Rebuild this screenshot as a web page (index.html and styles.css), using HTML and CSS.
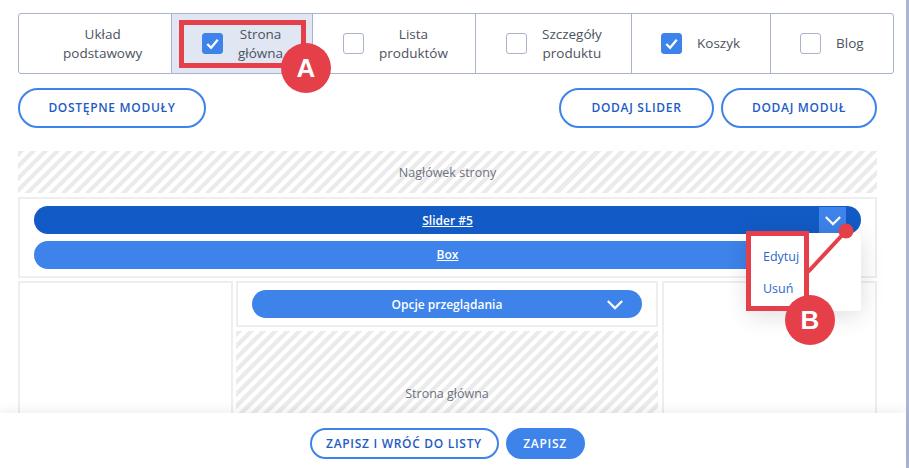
FILE: index.html
```html
<!DOCTYPE html>
<html lang="pl">
<head>
<meta charset="utf-8">
<title>Układ strony</title>
<link rel="stylesheet" href="styles.css">
</head>
<body>
<div class="page">
  <main class="content">
    <div class="tabs">
      <div class="tab tab-base"><span>Układ<br>podstawowy</span></div>
      <div class="tab tab-home is-selected"><span class="check is-on"><svg viewBox="0 0 20 20"><path d="M4.5 10.500l4 4 7-8.500"/></svg></span><span class="tab-label">Strona<br>główna</span></div>
      <div class="tab tab-list"><span class="check"></span><span class="tab-label">Lista<br>produktów</span></div>
      <div class="tab tab-detail"><span class="check"></span><span class="tab-label">Szczegóły<br>produktu</span></div>
      <div class="tab tab-cart"><span class="check is-on"><svg viewBox="0 0 20 20"><path d="M4.5 10.500l4 4 7-8.500"/></svg></span><span class="tab-label">Koszyk</span></div>
      <div class="tab tab-blog"><span class="check"></span><span class="tab-label">Blog</span></div>
    </div>
    <div class="actions">
      <button class="btn btn-avail">DOSTĘPNE MODUŁY</button>
      <div class="actions-right">
        <button class="btn btn-slider">DODAJ SLIDER</button>
        <button class="btn btn-module">DODAJ MODUŁ</button>
      </div>
    </div>
    <div class="hatch hatch-head">Nagłówek strony</div>
    <section class="frame frame-top">
      <div class="bar bar-dark"><a class="bar-link">Slider #5</a><span class="bar-toggle"><svg viewBox="0 0 20 12"><path d="M2 2l8 8 8-8"/></svg></span></div>
      <div class="bar bar-box"><a class="bar-link">Box</a></div>
    </section>
    <div class="columns">
      <div class="frame col-side"></div>
      <div class="col-mid">
        <div class="frame frame-opts">
          <div class="bar bar-opts"><span>Opcje przeglądania</span><svg class="opts-caret" viewBox="0 0 20 12"><path d="M2 2l8 8 8-8"/></svg></div>
        </div>
        <div class="hatch hatch-main">Strona główna</div>
      </div>
      <div class="frame col-side col-right"></div>
    </div>
  </main>
  <div class="scrollbar"></div>

  <div class="menu"><a>Edytuj</a><a>Usuń</a></div>

  <svg class="connector" viewBox="0 0 909 468"><path d="M808 272L846 231"/><circle cx="846" cy="231" r="7.500"/></svg>
  <div class="mark mark-a"></div>
  <div class="badge badge-a">A</div>
  <div class="mark mark-b"></div>
  <div class="badge badge-b">B</div>

  <footer class="footer">
    <button class="btn btn-foot btn-back">ZAPISZ I WRÓĆ DO LISTY</button>
    <button class="btn btn-foot btn-save">ZAPISZ</button>
  </footer>
</div>
</body>
</html>
```
FILE: styles.css
```css
* { box-sizing: border-box; }
html, body { margin: 0; padding: 0; background: #fff; }
body { font-family: "Open Sans", "Noto Sans", "Liberation Sans", sans-serif; color: #4a5060; }
.page { position: relative; width: 909px; height: 468px; overflow: hidden; display: flex; }
.content { width: 906px; padding: 13px 12px 0 18px; flex: none; }
.scrollbar { width: 3px; background: #a9b6d6; flex: none; }

.tabs { display: flex; width: 876px; height: 61px; border: 1px solid #a9b3cd; border-radius: 3px; margin-bottom: 14px; }
.tab { display: flex; align-items: center; padding-left: 30px; font-size: 13.5px; line-height: 18.500px; text-align: center; border-left: 1px solid #a9b3cd; color: #4d5260; }
.tab:first-child { border-left: 0; }
.tab-base { width: 152px; padding-left: 44px; }
.tab-home { width: 141px; }
.tab-list { width: 163px; }
.tab-detail { width: 156px; }
.tab-cart { width: 139px; padding-left: 29px; }
.tab-blog { flex: 1; padding-left: 29px; }
.is-selected { background: #e0e6f2; }
.check { width: 21px; height: 21px; border: 1px solid #aab3ca; border-radius: 3px; background: #fff; display: flex; flex: none; }
.check.is-on { background: #3d83ea; border-color: #3d83ea; }
.check svg { width: 19px; height: 19px; fill: none; stroke: #fff; stroke-width: 2.400; }
.tab-label { margin-left: 15px; }

.actions { display: flex; justify-content: space-between; width: 859px; margin-bottom: 23px; }
.actions-right { display: flex; gap: 7px; }
.btn { height: 40px; border: 2px solid #3d83ea; border-radius: 20px; background: #fff; color: #1d5cc4; font: 600 12px/1 "Open Sans", sans-serif; letter-spacing: .7px; padding: 0; }
.btn-avail { width: 188px; }
.btn-slider { width: 155px; }
.btn-module { width: 156px; }

.hatch { background: repeating-linear-gradient(135deg, #ebebeb 0 4.250px, #fff 4.250px 8.500px); display: flex; justify-content: center; color: #6d7280; font-size: 12.5px; }
.hatch-head { width: 859px; height: 42px; align-items: center; margin-bottom: 4px; }
.frame { border: 2px solid #eeeeee; background: #fff; }
.frame-top { width: 859px; height: 81px; padding: 7px 14px; display: flex; flex-direction: column; gap: 7px; margin-bottom: 3px; }
.bar { height: 28px; border-radius: 14px; background: #3d83ea; color: #fff; font-size: 12px; font-weight: 600; display: flex; align-items: center; justify-content: center; position: relative; flex: none; }
.bar-dark { background: #125bc6; }
.bar-box { padding-bottom: 1px; }
.bar-link { text-decoration: underline; }
.bar-toggle { position: absolute; right: 15px; top: 1px; width: 27px; height: 26px; background: #3d83ea; display: flex; align-items: center; justify-content: center; }
.bar-toggle svg { width: 18px; height: 11px; fill: none; stroke: #fff; stroke-width: 2.400; }

.columns { display: flex; width: 859px; height: 190px; }
.col-side { width: 215px; }
.col-right { margin-left: 4px; }
.col-mid { width: 422px; margin-left: 3px; flex: none; }
.frame-opts { height: 46px; padding: 7px 14px; margin-bottom: 4px; }
.bar-opts { font-weight: 600; }
.opts-caret { position: absolute; right: 18px; top: 9px; width: 18px; height: 11px; fill: none; stroke: #fff; stroke-width: 2.400; }
.hatch-main { height: 140px; padding-top: 54px; }

.menu { position: absolute; left: 748px; top: 233px; width: 113px; height: 78px; background: #fff; border-radius: 3px; box-shadow: 0 4px 24px rgba(0,0,0,.14); display: flex; flex-direction: column; padding: 15px 15px; gap: 14px; font-size: 12.5px; line-height: 18px; color: #2b68c9; }

.connector { position: absolute; left: 0; top: 0; width: 909px; height: 468px; pointer-events: none; }
.connector path { stroke: #e5404a; stroke-width: 4; fill: none; }
.connector circle { fill: #e5404a; }
.mark { position: absolute; border: 5px solid #e5404a; }
.mark-a { left: 179px; top: 20px; width: 127px; height: 48px; }
.mark-b { left: 746px; top: 231px; width: 63px; height: 80px; }
.badge { position: absolute; width: 50px; height: 50px; border-radius: 50%; background: #e5404a; color: #fff; font: 700 26px/50px "Liberation Sans", sans-serif; text-align: center; }
.badge-a { left: 281px; top: 43px; }
.badge-b { left: 785px; top: 295px; }

.footer { position: absolute; left: 0; right: 3px; bottom: 0; height: 55px; background: #fff; box-shadow: 0 -2px 12px rgba(0,0,0,.07); display: flex; justify-content: center; align-items: flex-start; gap: 7px; padding: 15px 12px 0 0; }
.btn-foot { height: 31px; border-radius: 16px; }
.btn-back { width: 189px; }
.btn-save { width: 79px; background: #3d83ea; color: #fff; }
```
